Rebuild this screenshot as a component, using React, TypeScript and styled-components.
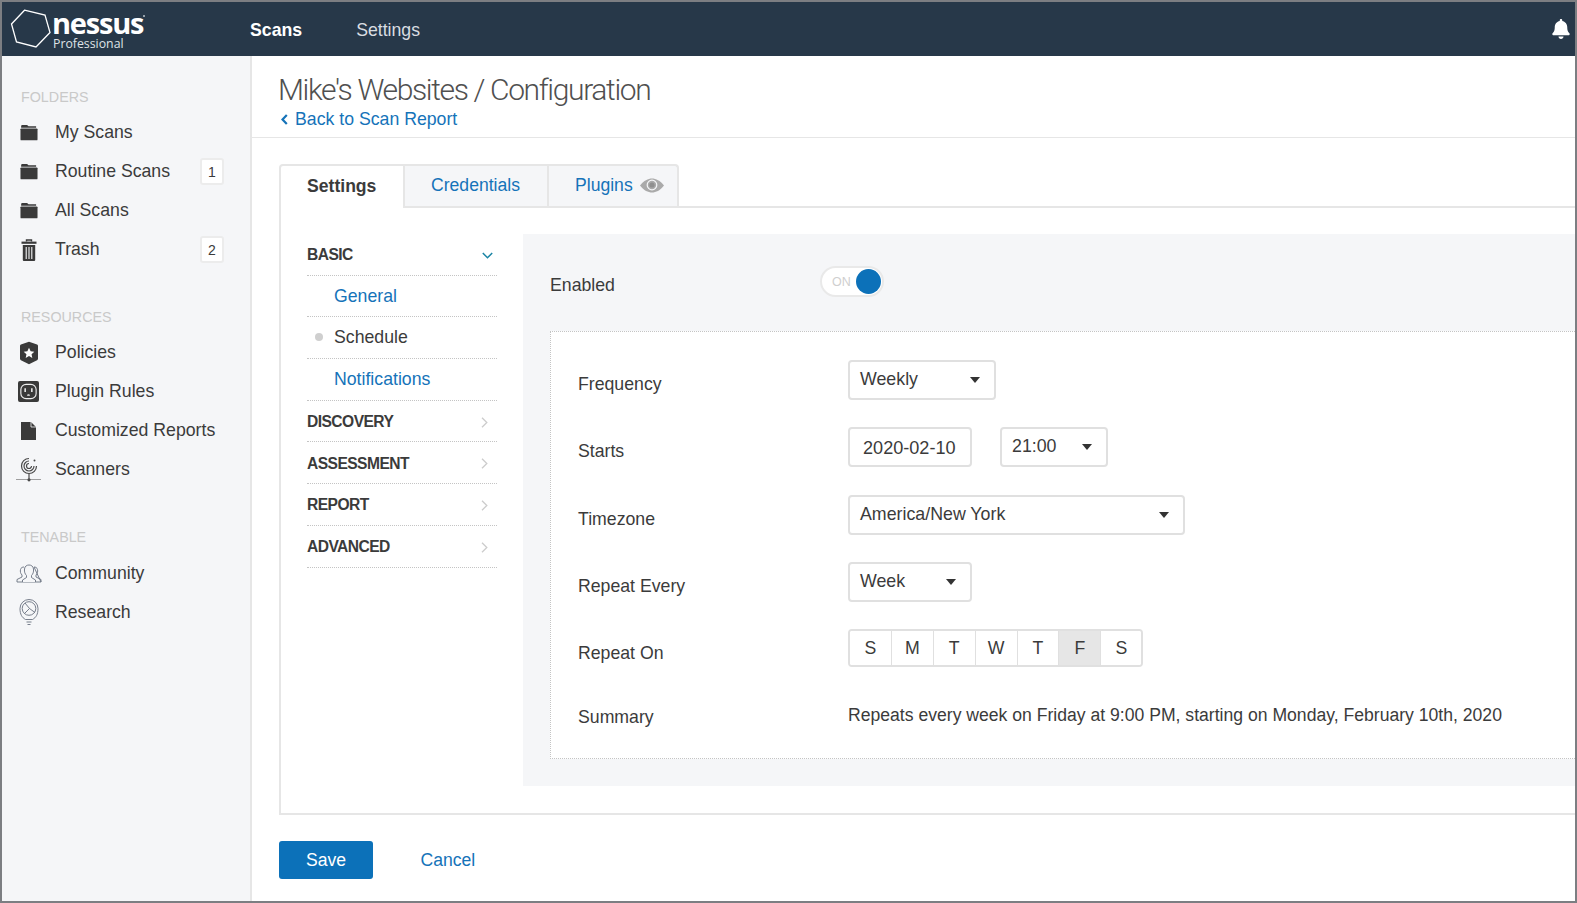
import React from "react";
import styled, { createGlobalStyle } from "styled-components";
import { FaBell } from "react-icons/fa";

const Global = createGlobalStyle`
  html, body { margin: 0; padding: 0; background: #fff; }
  * { box-sizing: border-box; }
  body { font-family: "Liberation Sans", Arial, sans-serif; color: #3b3b3b; }
`;

const Frame = styled.div`
  width: 1577px;
  height: 903px;
  border: 2px solid #7c7e82;
  overflow: hidden;
  display: flex;
  flex-direction: column;
`;

const TopBar = styled.header`
  height: 54px;
  flex: none;
  background: #273849;
  display: flex;
  align-items: center;
  color: #fff;
`;

const Logo = styled.div`
  width: 248px;
  height: 54px;
  flex: none;
  display: flex;
  padding-left: 8px;
  align-items: flex-start;
`;

const Hexagon = styled.svg`
  width: 42px;
  height: 40px;
  margin-top: 7px;
  flex: none;
`;

const LogoText = styled.div`
  display: flex;
  flex-direction: column;
  position: relative;
`;

const LogoName = styled.span`
  font-family: "Open Sans", sans-serif;
  font-weight: 700;
  font-size: 29px;
  letter-spacing: -1.2px;
  line-height: 22px;
  margin-top: 10px;
  &::after {
    content: "";
    position: absolute;
    left: 91px;
    top: 13px;
    width: 2px;
    height: 2px;
    border-radius: 50%;
    background: #b8c0c8;
  }
`;

const LogoSub = styled.span`
  font-family: "Open Sans", sans-serif;
  font-size: 12.3px;
  line-height: 14px;
  color: #dfe3e7;
  padding-left: 1px;
  margin-top: 3px;
`;

const TopLink = styled.a<{ $active?: boolean }>`
  font-size: 17.7px;
  font-weight: ${(p) => (p.$active ? 700 : 400)};
  color: ${(p) => (p.$active ? "#fff" : "#d9dde1")};
  margin-right: 54px;
  position: relative;
  top: 1px;
`;

const Bell = styled.div`
  margin-left: auto;
  margin-right: 4px;
  display: flex;
  font-size: 20px;
`;

const Body = styled.div`
  flex: 1;
  display: flex;
  min-height: 0;
`;

const Sidebar = styled.aside`
  width: 250px;
  flex: none;
  background: #f5f6f8;
  border-right: 2px solid #e6e6e6;
  padding-top: 31px;
`;

const SideSection = styled.div`
  margin-bottom: 38px;
`;

const SideTitle = styled.div`
  font-size: 14.3px;
  line-height: 20px;
  color: #c9c9c9;
  padding-left: 19px;
  margin-bottom: 6.2px;
`;

const SideItem = styled.div`
  height: 39px;
  display: flex;
  align-items: center;
  padding: 0 26px 0 12px;
  font-size: 17.7px;
  color: #3b3b3b;
`;

const SideIcon = styled.span`
  width: 29px;
  margin-right: 12px;
  flex: none;
  display: flex;
  justify-content: center;
`;

const Badge = styled.span`
  margin-left: auto;
  width: 24px;
  height: 27px;
  background: #fff;
  border: 2px solid #ececec;
  border-radius: 3px;
  font-size: 14px;
  display: flex;
  align-items: center;
  justify-content: center;
`;

const Main = styled.main`
  flex: 1;
  min-width: 0;
  display: flex;
  flex-direction: column;
`;

const PageHead = styled.div`
  height: 81.5px;
  flex: none;
  padding: 17px 0 0 26px;
  border-bottom: 1.5px solid #e6e6e6;
`;

const PageTitle = styled.h1`
  margin: 0;
  font-family: Roboto, sans-serif;
  font-weight: 300;
  font-size: 30px;
  line-height: 34px;
  letter-spacing: -1.35px;
  color: #505050;
`;

const BackLink = styled.a`
  display: flex;
  align-items: center;
  font-size: 17.7px;
  line-height: 24px;
  color: #1573b9;
  padding-left: 3px;
`;

const BackChevron = styled.svg`
  width: 7px;
  height: 11px;
  margin-right: 7px;
`;

const Content = styled.div`
  padding: 26.5px 0 0 27px;
  flex: 1;
`;

const Tabs = styled.div`
  display: flex;
  height: 44px;
  border-bottom: 2px solid #e6e6e6;
`;

const Tab = styled.div<{ $active?: boolean; $width: number }>`
  width: ${(p) => p.$width}px;
  height: ${(p) => (p.$active ? 44 : 42)}px;
  display: flex;
  align-items: center;
  padding: 0 0 2px 26px;
  font-size: 17.6px;
  font-weight: ${(p) => (p.$active ? 700 : 400)};
  color: ${(p) => (p.$active ? "#3b3b3b" : "#1573b9")};
  background: ${(p) => (p.$active ? "#fff" : "#f5f6f8")};
  border-top: 2px solid #e6e6e6;
  border-right: 2px solid #e6e6e6;
  ${(p) => p.$active && "border-left: 2px solid #e6e6e6; border-top-left-radius: 4px;"}
  &:last-child { border-top-right-radius: 4px; }
`;

const EyeIcon = styled.svg`
  width: 24px;
  height: 15px;
  margin-left: 7px;
`;

const Panel = styled.div`
  height: 607px;
  border-left: 2px solid #e6e6e6;
  border-bottom: 2px solid #e6e6e6;
  padding: 26px 0 0 26px;
  display: flex;
`;

const SectionNav = styled.nav`
  width: 190px;
  flex: none;
  margin-right: 26px;
`;

const NavRow = styled.div<{ $sub?: boolean; $current?: boolean }>`
  height: 41.7px;
  display: flex;
  align-items: center;
  position: relative;
  border-bottom: 1px dotted #c4c4c4;
  padding-left: ${(p) => (p.$sub ? 27 : 0)}px;
  padding-top: ${(p) => (p.$sub ? 0 : 2)}px;
  font-size: ${(p) => (p.$sub ? 17.7 : 15.6)}px;
  letter-spacing: ${(p) => (p.$sub ? 0 : -0.55)}px;
  font-weight: ${(p) => (p.$sub ? 400 : 700)};
  color: ${(p) => (p.$sub && !p.$current ? "#1573b9" : "#3b3b3b")};
  &::before {
    content: "";
    display: ${(p) => (p.$current ? "block" : "none")};
    position: absolute;
    left: 8px;
    top: 16px;
    width: 8px;
    height: 8px;
    border-radius: 50%;
    background: #cfcfcf;
  }
`;

const NavChevron = styled.svg<{ $end: number }>`
  margin-left: auto;
  margin-right: ${(p) => p.$end}px;
`;

const GreyPanel = styled.div`
  flex: 1;
  min-width: 0;
  height: 552px;
  background: #f5f6f8;
  padding-left: 27px;
`;

const EnabledRow = styled.div`
  height: 97px;
  display: flex;
  align-items: flex-start;
  padding-top: 32px;
`;

const EnabledLabel = styled.div`
  width: 270px;
  font-size: 17.7px;
  line-height: 22px;
  margin-top: 8px;
`;

const Toggle = styled.div`
  width: 64px;
  height: 31px;
  background: #fff;
  border: 2px solid #e9e9e9;
  border-radius: 16px;
  display: flex;
  align-items: center;
  padding: 0 1px 0 10px;
  font-size: 12.5px;
  color: #cfcfcf;
  justify-content: space-between;
`;

const Knob = styled.span`
  width: 25px;
  height: 25px;
  border-radius: 50%;
  background: #0c71b9;
`;

const FormBox = styled.div`
  height: 428px;
  background: #fff;
  border: 1px dotted #c4c4c4;
  border-right: none;
  padding: 28px 0 0 27px;
`;

const FormRow = styled.div<{ $height?: number }>`
  display: flex;
  height: ${(p) => p.$height ?? 40}px;
  margin-bottom: 27.3px;
`;

const FormLabel = styled.div`
  width: 270px;
  flex: none;
  font-size: 17.7px;
  line-height: 22px;
  padding-top: 13px;
  height: 35px;
`;

const Select = styled.div<{ $width: number }>`
  width: ${(p) => p.$width}px;
  height: 40px;
  margin-right: 27px;
  border: 2px solid #e0e0e0;
  border-radius: 4px;
  background: #fff;
  display: flex;
  align-items: center;
  padding: 0 14px 1px 10px;
  font-size: 17.8px;
  justify-content: space-between;
  &::after {
    content: "";
    margin-top: 1px;
    border-left: 5.5px solid transparent;
    border-right: 5.5px solid transparent;
    border-top: 6px solid #333;
  }
`;

const DateInput = styled.div`
  width: 124px;
  height: 40px;
  margin-right: 28px;
  border: 2px solid #e0e0e0;
  border-radius: 4px;
  display: flex;
  align-items: center;
  padding: 2px 0 0 13px;
  font-size: 18.1px;
`;

const DayGroup = styled.div`
  display: flex;
  height: 38px;
  border: 2px solid #e0e0e0;
  border-radius: 4px;
  overflow: hidden;
`;

const Day = styled.div<{ $on?: boolean }>`
  width: 41.9px;
  display: flex;
  align-items: center;
  justify-content: center;
  padding-top: 1px;
  font-size: 17.7px;
  background: ${(p) => (p.$on ? "#e6e6e6" : "#fff")};
  border-right: 1.5px solid #e0e0e0;
  &:last-child { border-right: none; width: 40px; }
`;

const SummaryText = styled.div`
  font-size: 17.6px;
  line-height: 22px;
  padding-top: 11px;
  white-space: nowrap;
`;

const Actions = styled.div`
  display: flex;
  align-items: center;
  margin-top: 26px;
`;

const SaveButton = styled.button`
  width: 94px;
  height: 38px;
  border: none;
  border-radius: 3px;
  background: #0c71b9;
  color: #fff;
  font: 17.6px "Liberation Sans", Arial, sans-serif;
  margin-right: 47.5px;
`;

const CancelLink = styled.a`
  font-size: 17.6px;
  color: #1573b9;
`;

const dark = "#3a3a3a";

const Folder = () => (
  <svg width="18" height="17" viewBox="0 0 19 17">
    <path d="M2 .5h5.5L9 2h8v1.4H1.2V1.3z" fill={dark} />
    <rect x="0.5" y="4.2" width="18" height="12.6" rx="1" fill={dark} />
  </svg>
);

const Trash = () => (
  <svg width="16" height="22" viewBox="0 0 16 22">
    <path d="M5.5 2.5V1h5v1.5" fill="none" stroke={dark} strokeWidth="1.4" />
    <rect x="0.5" y="2.6" width="15" height="2.2" fill={dark} />
    <path d="M1.8 6h12.4v15a1 1 0 0 1-1 1H2.8a1 1 0 0 1-1-1z" fill={dark} />
    <path d="M5.2 8v12M8 8v12M10.8 8v12" stroke="#f5f6f8" strokeWidth="1.1" />
  </svg>
);

const Shield = () => (
  <svg width="18" height="24" viewBox="0 0 19 24">
    <path d="M9.5 0 18 3q1 .4 1 1.4V18q0 1-1 1.6L9.5 24 1 19.6Q0 19 0 18V4.400q0-1 1-1.400z" fill={dark} />
    <path d="m9.500 6.500 1.700 3.600 3.900.5-2.900 2.700.8 3.900-3.500-2-3.500 2 .8-3.900-2.900-2.700 3.900-.5z" fill="#fff" />
  </svg>
);

const Plug = () => (
  <svg width="21" height="21" viewBox="0 0 22 22">
    <rect width="22" height="22" rx="2" fill={dark} />
    <rect x="3" y="3.500" width="16" height="15" rx="5.500" fill="none" stroke="#eee" strokeWidth="1.200" />
    <path d="M7.500 7.500v4M14.500 7.500v4" stroke="#eee" strokeWidth="1.600" />
    <path d="M9.500 15.500a1.500 1.500 0 0 1 3 0z" fill="#eee" />
  </svg>
);

const Doc = () => (
  <svg width="15" height="18" viewBox="0 0 15 18">
    <path d="M0 0h10l5 5v13H0z" fill={dark} />
    <path d="M10 0v5h5" fill="none" stroke="#f5f6f8" strokeWidth="0.8" />
  </svg>
);

const Scanner = () => (
  <svg width="26" height="26" viewBox="0 0 26 26" fill="none" stroke="#4a4a4a" strokeWidth="1.200">
    <path d="M13 1.500A7.500 7.500 0 1 0 20.500 9" />
    <path d="M13 4A5 5 0 1 0 18 9" />
    <path d="M13 6.500A2.500 2.500 0 1 0 15.500 9" />
    <circle cx="18.500" cy="3.500" r="1" fill="#4a4a4a" stroke="none" />
    <path d="M13 16.500v6" />
    <path d="M0 22.500h25" stroke="#888" strokeWidth="0.800" />
    <circle cx="13" cy="22.800" r="1.600" fill="#4a4a4a" stroke="none" />
  </svg>
);

const Community = () => (
  <svg width="26" height="19" viewBox="0 0 26 19" fill="none" stroke="#6a7280" strokeWidth="0.900">
    <path d="M1 18v-2.500l5-2.500v-2C4.500 9.500 4 7.500 4.500 5.500 5 3.500 6.500 3 8 3" />
    <path d="M18 3c1.500 0 3 .5 3.500 2.500.5 2 0 4-1.500 5.500v2l5 2.500V18z" />
    <path d="M1 18h24" />
    <path d="M6.500 18v-2l4-2.500v-2C9 10 8.200 8 8.500 5 8.800 2 11 1 13 1s4.200 1 4.500 4c.3 3-.5 5-2 6.500v2l4 2.500v2" fill="#f5f6f8" />
  </svg>
);

const Research = () => (
  <svg width="20" height="28" viewBox="0 0 20 28" fill="none" stroke="#6a7280" strokeWidth="0.900">
    <path d="M6.500 21.500C3 19.500 1 16.500 1 10.500a9 9 0 0 1 18 0c0 6-2 9-5.500 11z" />
    <circle cx="10" cy="10.500" r="6.800" />
    <path d="M6 5l4.500 5.500-5 5M10.500 10.500l5.500 4" />
    <path d="M7.500 24h5M8.500 26.500h3" />
  </svg>
);

const Right = () => (
  <NavChevron $end={9} width="7" height="11" viewBox="0 0 7 11" fill="none" stroke="#cccccc" strokeWidth="1.300">
    <path d="M1 .8 5.800 5.500 1 10.200" />
  </NavChevron>
);

const Down = () => (
  <NavChevron $end={4} width="11" height="7" viewBox="0 0 11 7" fill="none" stroke="#1b85a5" strokeWidth="1.500">
    <path d="M.8 1 5.500 5.800 10.200 1" />
  </NavChevron>
);

const sideGroups = [
  {
    title: "FOLDERS",
    items: [
      { label: "My Scans", icon: <Folder /> },
      { label: "Routine Scans", icon: <Folder />, count: 1 },
      { label: "All Scans", icon: <Folder /> },
      { label: "Trash", icon: <Trash />, count: 2 },
    ],
  },
  {
    title: "RESOURCES",
    items: [
      { label: "Policies", icon: <Shield /> },
      { label: "Plugin Rules", icon: <Plug /> },
      { label: "Customized Reports", icon: <Doc /> },
      { label: "Scanners", icon: <Scanner /> },
    ],
  },
  {
    title: "TENABLE",
    items: [
      { label: "Community", icon: <Community /> },
      { label: "Research", icon: <Research /> },
    ],
  },
];

const days = ["S", "M", "T", "W", "T", "F", "S"];

export default function App() {
  return (
    <>
      <Global />
      <Frame>
        <TopBar>
          <Logo>
            <Hexagon viewBox="0 0 42 40" fill="none" stroke="#fff" strokeWidth="1.300">
              <path d="M14.500 1.200 35 6l5 17.500-14 14.500-19.500-5L1.500 15z" />
            </Hexagon>
            <LogoText>
              <LogoName>nessus</LogoName>
              <LogoSub>Professional</LogoSub>
            </LogoText>
          </Logo>
          <TopLink $active>Scans</TopLink>
          <TopLink>Settings</TopLink>
          <Bell>
            <FaBell />
          </Bell>
        </TopBar>
        <Body>
          <Sidebar>
            {sideGroups.map((group) => (
              <SideSection key={group.title}>
                <SideTitle>{group.title}</SideTitle>
                {group.items.map((item) => (
                  <SideItem key={item.label}>
                    <SideIcon>{item.icon}</SideIcon>
                    {item.label}
                    {item.count && <Badge>{item.count}</Badge>}
                  </SideItem>
                ))}
              </SideSection>
            ))}
          </Sidebar>
          <Main>
            <PageHead>
              <PageTitle>Mike's Websites / Configuration</PageTitle>
              <BackLink>
                <BackChevron viewBox="0 0 7 11" fill="none" stroke="#1573b9" strokeWidth="2.200">
                  <path d="M5.800 1 1.500 5.500l4.300 4.500" />
                </BackChevron>
                Back to Scan Report
              </BackLink>
            </PageHead>
            <Content>
              <Tabs>
                <Tab $active $width={126}>Settings</Tab>
                <Tab $width={144}>Credentials</Tab>
                <Tab $width={130}>
                  Plugins
                  <EyeIcon viewBox="0 0 24 15">
                    <path d="M0 7.500C4 2.500 8 .5 12 .5s8 2 12 7c-4 5-8 7-12 7s-8-2-12-7z" fill="#aaaaaa" />
                    <circle cx="12" cy="7" r="4.800" fill="none" stroke="#f5f6f8" strokeWidth="1.200" />
                    <circle cx="12" cy="7" r="2.600" fill="#8f8f8f" />
                  </EyeIcon>
                </Tab>
              </Tabs>
              <Panel>
                <SectionNav>
                  <NavRow>BASIC<Down /></NavRow>
                  <NavRow $sub>General</NavRow>
                  <NavRow $sub $current>Schedule</NavRow>
                  <NavRow $sub>Notifications</NavRow>
                  <NavRow>DISCOVERY<Right /></NavRow>
                  <NavRow>ASSESSMENT<Right /></NavRow>
                  <NavRow>REPORT<Right /></NavRow>
                  <NavRow>ADVANCED<Right /></NavRow>
                </SectionNav>
                <GreyPanel>
                  <EnabledRow>
                    <EnabledLabel>Enabled</EnabledLabel>
                    <Toggle>ON<Knob /></Toggle>
                  </EnabledRow>
                  <FormBox>
                    <FormRow>
                      <FormLabel>Frequency</FormLabel>
                      <Select $width={148}>Weekly</Select>
                    </FormRow>
                    <FormRow>
                      <FormLabel>Starts</FormLabel>
                      <DateInput>2020-02-10</DateInput>
                      <Select $width={108}>21:00</Select>
                    </FormRow>
                    <FormRow>
                      <FormLabel>Timezone</FormLabel>
                      <Select $width={337}>America/New York</Select>
                    </FormRow>
                    <FormRow>
                      <FormLabel>Repeat Every</FormLabel>
                      <Select $width={124}>Week</Select>
                    </FormRow>
                    <FormRow $height={37}>
                      <FormLabel>Repeat On</FormLabel>
                      <DayGroup>
                        {days.map((d, i) => (
                          <Day key={i} $on={i === 5}>{d}</Day>
                        ))}
                      </DayGroup>
                    </FormRow>
                    <FormRow $height={34}>
                      <FormLabel>Summary</FormLabel>
                      <SummaryText>Repeats every week on Friday at 9:00 PM, starting on Monday, February 10th, 2020</SummaryText>
                    </FormRow>
                  </FormBox>
                </GreyPanel>
              </Panel>
              <Actions>
                <SaveButton>Save</SaveButton>
                <CancelLink>Cancel</CancelLink>
              </Actions>
            </Content>
          </Main>
        </Body>
      </Frame>
    </>
  );
}
